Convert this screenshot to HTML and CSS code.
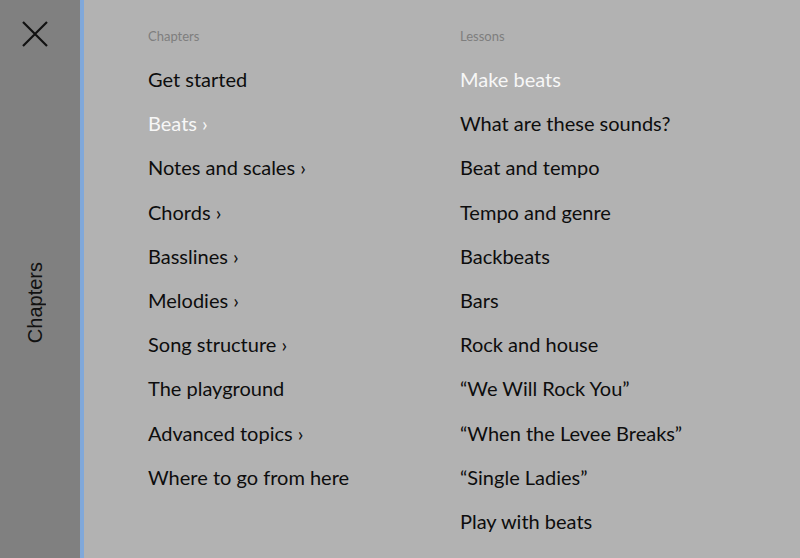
FILE: index.html
```html
<!DOCTYPE html>
<html>
<head>
<meta charset="utf-8">
<link rel="stylesheet" href="styles.css">
</head>
<body>
<div class="app">
  <aside class="sidebar">
    <button class="close" aria-label="Close">
      <svg width="26" height="26" viewBox="0 0 26 26"><path d="M1 1 L25 25 M25 1 L1 25" stroke="#111" stroke-width="2.2" fill="none"/></svg>
    </button>
    <div class="side-label-wrap"><span class="side-label">Chapters</span></div>
  </aside>
  <main class="menu">
    <section class="col">
      <h2 class="heading">Chapters</h2>
      <ul class="list">
        <li>Get started</li>
        <li class="active">Beats ›</li>
        <li>Notes and scales ›</li>
        <li>Chords ›</li>
        <li>Basslines ›</li>
        <li>Melodies ›</li>
        <li>Song structure ›</li>
        <li>The playground</li>
        <li>Advanced topics ›</li>
        <li>Where to go from here</li>
      </ul>
    </section>
    <section class="col">
      <h2 class="heading">Lessons</h2>
      <ul class="list">
        <li class="active">Make beats</li>
        <li>What are these sounds?</li>
        <li>Beat and tempo</li>
        <li>Tempo and genre</li>
        <li>Backbeats</li>
        <li>Bars</li>
        <li>Rock and house</li>
        <li>“We Will Rock You”</li>
        <li>“When the Levee Breaks”</li>
        <li>“Single Ladies”</li>
        <li>Play with beats</li>
      </ul>
    </section>
  </main>
</div>
</body>
</html>
```
FILE: styles.css
```css
html, body {
  margin: 0;
  padding: 0;
  height: 100%;
  overflow: hidden;
}
.app {
  display: flex;
  height: 558px;
  width: 800px;
  background: #b2b2b2;
}
.sidebar {
  width: 80px;
  flex: none;
  background: #808080;
  border-right: 4px solid #80a8da;
  display: flex;
  flex-direction: column;
}
.close {
  background: none;
  border: 0;
  padding: 0;
  margin: 21px 0 0 22px;
  width: 26px;
  height: 26px;
  display: block;
}
.close svg { display: block; }
.side-label-wrap {
  flex: 1;
  display: flex;
  align-items: center;
  justify-content: center;
  padding-right: 10px;
}
.side-label {
  writing-mode: vertical-rl;
  transform: rotate(180deg);
  font-family: "Liberation Sans", Arial, sans-serif;
  font-size: 20px;
  color: #111;
}
.menu {
  display: flex;
  padding: 14px 0 0 64px;
  font-family: "Lato", sans-serif;
}
.col {
  width: 312px;
}
.heading {
  margin: 0;
  font-size: 13px;
  font-weight: normal;
  line-height: 44px;
  color: #7e7e7e;
}
.list {
  list-style: none;
  margin: -1px 0 0;
  padding: 0;
}
.list li {
  font-size: 20px;
  line-height: 44.2px;
  color: #0d0d0d;
  white-space: nowrap;
}
.list li.active {
  color: #f7f7f7;
}
```
